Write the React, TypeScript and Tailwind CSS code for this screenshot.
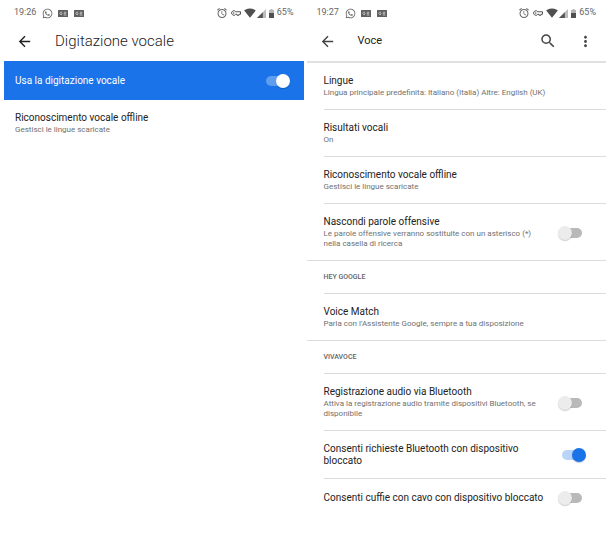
import { useId } from "react";
import { FaWhatsapp } from "react-icons/fa";
import {
    MdArrowBack,
    MdMoreVert,
    MdOutlineAlarm,
    MdSearch,
    MdSignalWifi4Bar,
} from "react-icons/md";

type Setting = {
    title: string;
    detail?: string;
    on?: boolean;
};

type Section = {
    heading?: string;
    settings: Setting[];
};

const sections: Section[] = [
    {
        settings: [
            {
                title: "Lingue",
                detail: "Lingua principale predefinita: Italiano (Italia) Altre: English (UK)",
            },
            { title: "Risultati vocali", detail: "On" },
            {
                title: "Riconoscimento vocale offline",
                detail: "Gestisci le lingue scaricate",
            },
            {
                title: "Nascondi parole offensive",
                detail: "Le parole offensive verranno sostituite con un asterisco (*) nella casella di ricerca",
                on: false,
            },
        ],
    },
    {
        heading: "HEY GOOGLE",
        settings: [
            {
                title: "Voice Match",
                detail: "Parla con l'Assistente Google, sempre a tua disposizione",
            },
        ],
    },
    {
        heading: "VIVAVOCE",
        settings: [
            {
                title: "Registrazione audio via Bluetooth",
                detail: "Attiva la registrazione audio tramite dispositivi Bluetooth, se disponibile",
                on: false,
            },
            {
                title: "Consenti richieste Bluetooth con dispositivo bloccato",
                on: true,
            },
            {
                title: "Consenti cuffie con cavo con dispositivo bloccato",
                on: false,
            },
        ],
    },
];

function NewsBadge() {
    return (
        <svg viewBox="0 0 20 14" className="h-[7px] w-[10px]">
            <rect width="20" height="14" rx="1" fill="#5f5f5f" />
            <path
                d="M8 5A2.5 2.5 0 1 0 8.500 7.500H6.500M11.500 4.500H17M11.500 7.300H16M11.500 10H17"
                fill="none"
                stroke="#e4e4e4"
                strokeWidth="1.400"
            />
        </svg>
    );
}

function KeyIcon() {
    return (
        <svg
            viewBox="0 0 20 12"
            className="h-[6px] w-[10px]"
            fill="none"
            stroke="#555"
            strokeWidth="2"
        >
            <path d="M9.500 3.500A4.500 4.500 0 1 0 9.500 8.500H12V10.500H16V8.500H19V3.500Z" />
            <circle cx="5.500" cy="6" r="1.500" fill="#555" stroke="none" />
        </svg>
    );
}

function SignalIcon() {
    return (
        <svg viewBox="0 0 20 20" className="size-[9px]">
            <path d="M20 0V20H0Z" fill="#bdbdbd" />
            <path d="M13 7V20H0Z" fill="#555" />
        </svg>
    );
}

function BatteryIcon() {
    return (
        <svg viewBox="0 0 10 18" className="h-[9px] w-[5px]">
            <path d="M3 0H7V2H10V8H0V2H3Z" fill="#b5b5b5" />
            <path d="M0 8H10V18H0Z" fill="#505050" />
        </svg>
    );
}

function StatusBar({ time }: { time: string }) {
    return (
        <div className="flex h-[26px] items-center px-[10px] text-[9px] text-[#666]">
            <span>{time}</span>
            <div className="ml-[6px] flex items-center gap-[6px]">
                <FaWhatsapp size={11} className="-mr-px" />
                <NewsBadge />
                <NewsBadge />
            </div>
            <div className="ml-auto flex items-center gap-[3px]">
                <MdOutlineAlarm size={12} />
                <KeyIcon />
                <MdSignalWifi4Bar size={12} color="#505050" className="-mr-[2px]" />
                <SignalIcon />
                <BatteryIcon />
                <span>65%</span>
            </div>
        </div>
    );
}

function Switch({ id, on, light }: { id: string; on: boolean; light?: boolean }) {
    return (
        <input
            id={id}
            type="checkbox"
            role="switch"
            defaultChecked={on}
            className={
                "relative h-[14px] w-7 shrink-0 cursor-pointer appearance-none before:absolute before:inset-x-1 before:inset-y-[2px] before:rounded-full after:absolute after:top-0 after:left-0 after:size-[14px] after:rounded-full after:shadow-[0_1px_1px_rgba(0,0,0,0.2)] checked:after:left-[14px] " +
                (light
                    ? "before:bg-white/30 after:bg-white"
                    : "before:bg-[#b9b9b9] after:bg-[#ececec] checked:before:bg-[#b9d4f8] checked:after:bg-[#1a73e8]")
            }
        />
    );
}

function SettingRow({ title, detail, on }: Setting) {
    const id = useId();
    const text = (
        <>
            <span className="block text-[10px] leading-3 text-[#222]">{title}</span>
            {detail && (
                <span className="mt-px block pr-2 text-[8px] leading-[10px] text-[#707070]">
                    {detail}
                </span>
            )}
        </>
    );

    if (on === undefined) {
        return (
            <button className="block w-full cursor-pointer pt-3 pb-[11px] text-left">
                {text}
            </button>
        );
    }

    return (
        <div className="flex items-center gap-2 pt-3 pr-5 pb-[11px]">
            <label htmlFor={id} className="flex-1 cursor-pointer">
                {text}
            </label>
            <Switch id={id} on={on} />
        </div>
    );
}

function DictationScreen() {
    return (
        <main className="min-w-0 flex-1">
            <StatusBar time="19:26" />
            <header className="flex h-[35px] items-center gap-[22px] px-3 pb-[5px] text-[#222]">
                <button aria-label="Indietro" className="cursor-pointer">
                    <MdArrowBack size={17} />
                </button>
                <h1 className="text-[15px] font-light">Digitazione vocale</h1>
            </header>
            <div className="flex h-[39px] items-center justify-between bg-[#1a73e8] pr-[14px] pl-[11px]">
                <label
                    htmlFor="dictation"
                    className="cursor-pointer text-[10px] text-white"
                >
                    Usa la digitazione vocale
                </label>
                <Switch id="dictation" on light />
            </div>
            <div className="pl-[11px]">
                <SettingRow
                    title="Riconoscimento vocale offline"
                    detail="Gestisci le lingue scaricate"
                />
            </div>
        </main>
    );
}

function VoiceScreen() {
    return (
        <main className="min-w-0 flex-1">
            <StatusBar time="19:27" />
            <header className="flex h-[37px] items-center border-b-2 border-[#e0e0e0] px-3 pb-[5px] text-[#444]">
                <button aria-label="Indietro" className="cursor-pointer">
                    <MdArrowBack size={17} />
                </button>
                <h1 className="ml-[22px] flex-1 text-[11px] text-[#222]">Voce</h1>
                <button aria-label="Cerca" className="cursor-pointer">
                    <MdSearch size={18} />
                </button>
                <button aria-label="Altre opzioni" className="ml-5 cursor-pointer">
                    <MdMoreVert size={17} />
                </button>
            </header>
            {sections.map((section, index) => (
                <section
                    key={index}
                    className="border-b border-[#dcdcdc] last:border-b-0"
                >
                    <div className="ml-[17px] divide-y divide-[#dcdcdc]">
                        {section.heading && (
                            <h2 className="py-[11px] text-[7px] leading-[10px] font-medium text-[#5f6368]">
                                {section.heading}
                            </h2>
                        )}
                        {section.settings.map((setting) => (
                            <SettingRow key={setting.title} {...setting} />
                        ))}
                    </div>
                </section>
            ))}
        </main>
    );
}

export default function App() {
    return (
        <div className="flex min-h-screen gap-[3px] bg-white px-1 font-[Roboto,sans-serif]">
            <DictationScreen />
            <VoiceScreen />
        </div>
    );
}
